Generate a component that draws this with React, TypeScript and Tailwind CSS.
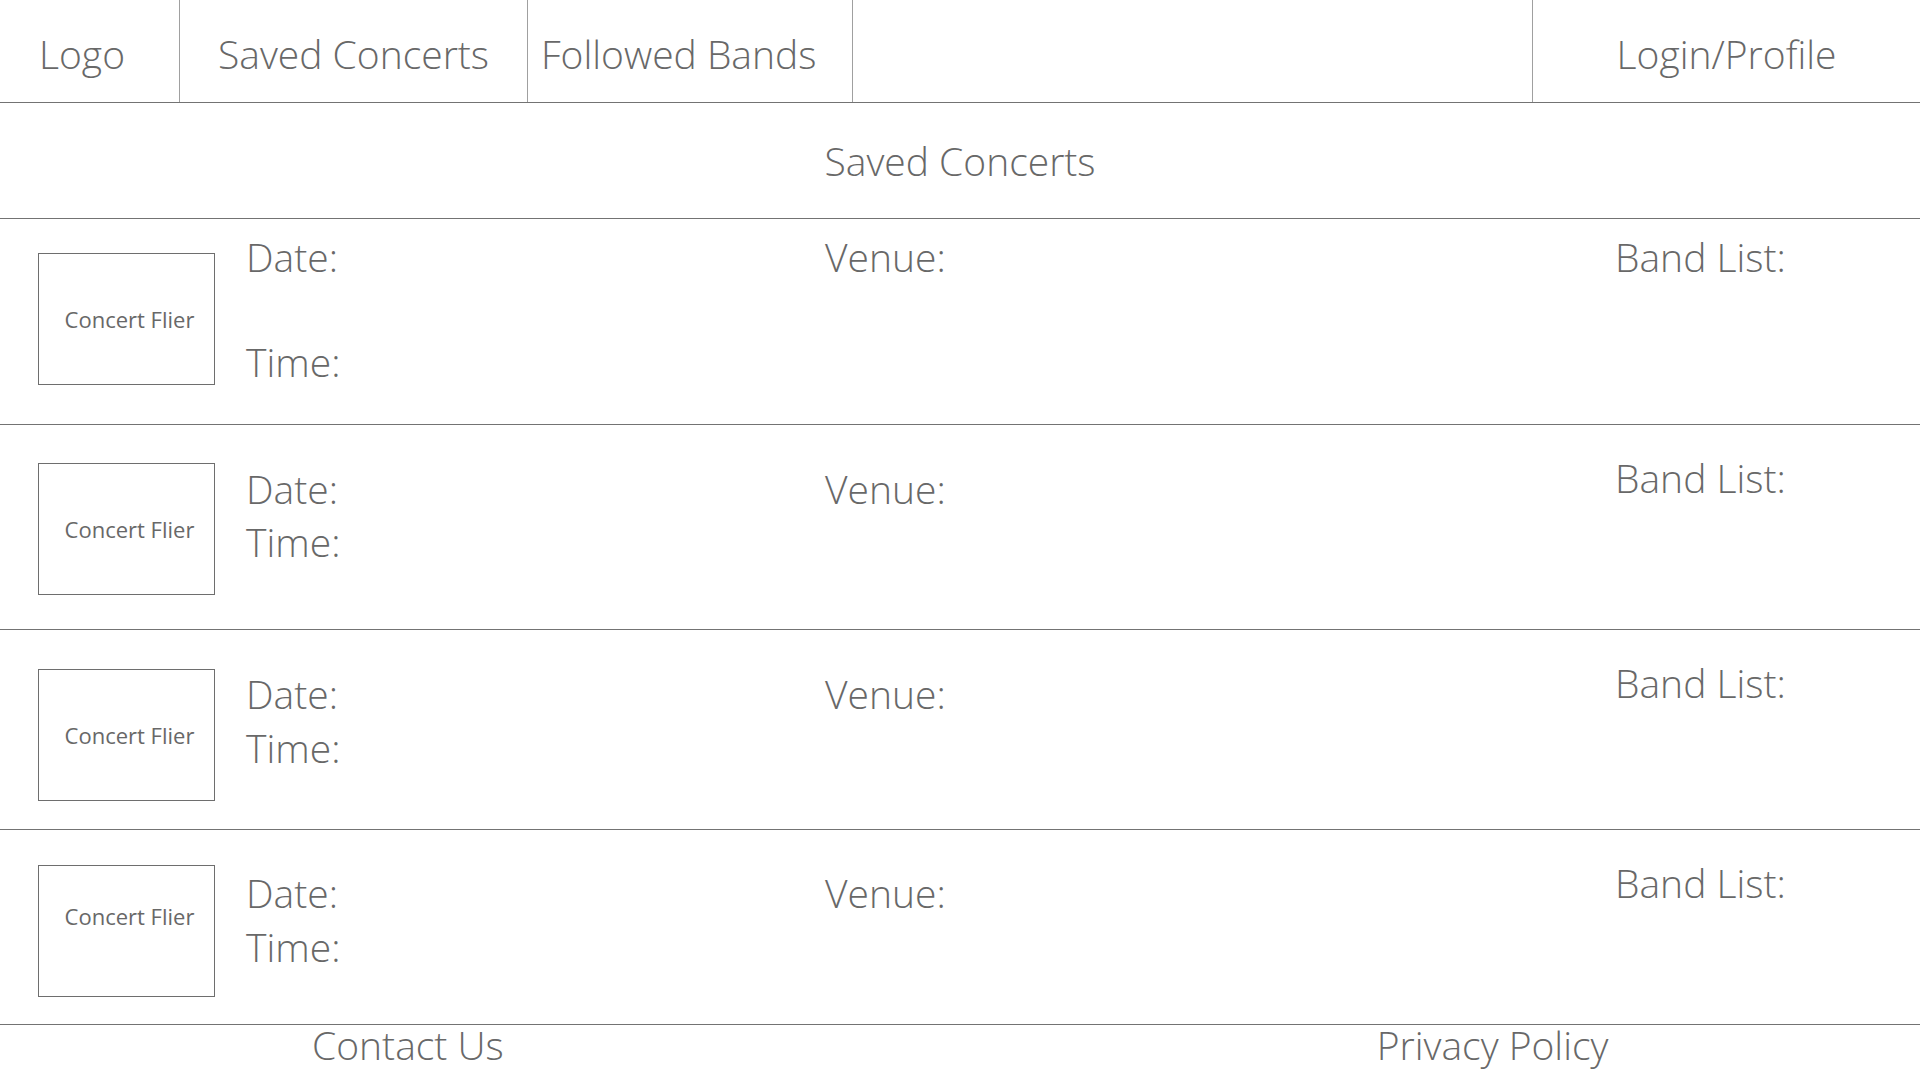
import React from "react";

const font = { fontFamily: '"Open Sans", "Noto Sans", sans-serif' };

type Row = {
  h: string;
  box: string;
  flier: string;
  date: string;
  time: string;
  venue: string;
  band: string;
};

const rows: Row[] = [
  { h: "h-[206px]", box: "mt-[34px]", flier: "pb-0", date: "mt-[14px]", time: "mt-[57px]", venue: "mt-[14px]", band: "mt-[14px]" },
  { h: "h-[205px]", box: "mt-[38px]", flier: "pb-0", date: "mt-[40px]", time: "mt-[5px]", venue: "mt-[40px]", band: "mt-[29px]" },
  { h: "h-[200px]", box: "mt-[39px]", flier: "pb-0", date: "mt-[40px]", time: "mt-[6px]", venue: "mt-[40px]", band: "mt-[29px]" },
  { h: "h-[195px]", box: "mt-[35px]", flier: "pb-[30px]", date: "mt-[39px]", time: "mt-[6px]", venue: "mt-[39px]", band: "mt-[29px]" },
];

export default function App() {
  return (
    <div className="w-[1920px] h-[1080px] bg-white text-[#686868] overflow-hidden font-light" style={font}>
      {/* Header */}
      <div className="flex h-[103px] border-b border-[#737373]">
        <div className="w-[180px] flex items-center justify-start pl-[39px] pt-[5px] border-r border-[#a0a0a0] text-[39px] leading-[48px]">Logo</div>
        <div className="w-[348px] flex items-center justify-center pt-[5px] border-r border-[#a0a0a0] text-[39px] leading-[48px]">Saved Concerts</div>
        <div className="w-[325px] flex items-center justify-start pl-[13px] pt-[5px] border-r border-[#a0a0a0] text-[39px] leading-[48px]">Followed Bands</div>
        <div className="flex-1" />
        <div className="w-[388px] flex items-center justify-center pt-[5px] border-l border-[#a0a0a0] text-[39px] leading-[48px]">Login/Profile</div>
      </div>

      {/* Title */}
      <div className="h-[116px] flex items-center justify-center border-b border-[#737373] text-[39px] leading-[48px]">
        Saved Concerts
      </div>

      {/* Rows */}
      {rows.map((r, i) => (
        <div key={i} className={`${r.h} flex items-start border-b border-[#737373]`}>
          <div className={`${r.box} ${r.flier} ml-[38px] w-[177px] h-[132px] border border-[#6e6e6e] flex items-center justify-center text-[22px] leading-[28px] pl-[6px] font-normal`}>
            Concert Flier
          </div>
          <div className="ml-[31px] w-[579px] flex flex-col text-[39px] leading-[48px]">
            <div className={r.date}>Date:</div>
            <div className={r.time}>Time:</div>
          </div>
          <div className="w-[790px] text-[39px] leading-[48px]">
            <div className={r.venue}>Venue:</div>
          </div>
          <div className="flex-1 text-[39px] leading-[48px]">
            <div className={r.band}>Band List:</div>
          </div>
        </div>
      ))}

      {/* Footer */}
      <div className="flex text-[39px] leading-[40px]">
        <div className="ml-[312px]">Contact Us</div>
        <div className="ml-[873px]">Privacy Policy</div>
      </div>
    </div>
  );
}
